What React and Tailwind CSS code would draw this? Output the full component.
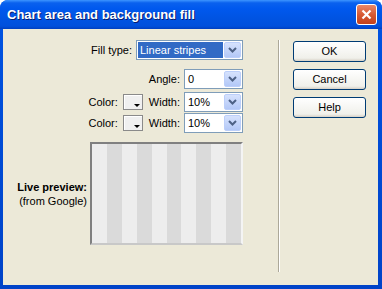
const font = { fontFamily: '"Liberation Sans", Arial, sans-serif' };

const Chevron = () => (
  <svg width="9" height="6" viewBox="0 0 9 6">
    <path d="M1 1 L4.5 4.5 L8 1" fill="none" stroke="#4d6185" strokeWidth="2" />
  </svg>
);

const Select = ({ value, width, selected }) => (
  <div className={`h-[20px] ${width} flex items-center border border-[#7f9db9] bg-white p-[1px]`}>
    <div className="flex-1 h-full flex items-center">
      <span className={`h-full flex items-center pl-[2px] pr-[4px] text-[11px] ${selected ? "bg-[#316ac5] text-white flex-1" : "text-black"}`}>
        {value}
      </span>
    </div>
    <div className="w-[17px] h-full ml-[1px] flex items-center justify-center rounded-[2px] border border-[#bccffa] bg-[linear-gradient(to_bottom,#d6e2fd,#b3c8f7)]">
      <Chevron />
    </div>
  </div>
);

const Swatch = () => (
  <div className="relative w-[20px] h-[16px] border border-[#8a8a8a] bg-[#f0f0f0] shadow-[inset_1px_1px_0_#fff]">
    <div className="absolute right-[2px] bottom-[2px] w-0 h-0 border-l-[3px] border-r-[3px] border-t-[3px] border-l-transparent border-r-transparent border-t-black" />
  </div>
);

const Btn = ({ label }) => (
  <button className="w-[73px] h-[21px] rounded-[3px] border border-[#003c74] bg-[linear-gradient(to_bottom,#ffffff,#f0f0ea_85%,#d6d0c5)] text-[11px] text-black">
    {label}
  </button>
);

export default function App() {
  const stripes = [0, 1, 2, 3, 4, 5, 6, 7, 8, 9];
  return (
    <div style={font} className="w-[382px] h-[289px] flex flex-col rounded-t-[8px] bg-[linear-gradient(to_bottom,#0054e3,#0043c8)] overflow-hidden">
      <div className="h-[29px] flex items-center justify-between pl-[7px] pr-[5px] bg-[linear-gradient(to_bottom,#3d95ff_0%,#0a61ee_10%,#0058ee_30%,#0054e3_60%,#0050dc_90%,#003fc0_100%)]">
        <span className="text-white font-bold text-[13px] [text-shadow:1px_1px_0_#0a1e6e]">
          Chart area and background fill
        </span>
        <div className="w-[21px] h-[21px] flex items-center justify-center rounded-[3px] border border-white bg-[linear-gradient(to_bottom,#e8886a,#d75a34_50%,#c2401b)]">
          <svg width="11" height="11" viewBox="0 0 11 11">
            <path d="M1.5 1.5 L9.5 9.5 M9.5 1.5 L1.5 9.5" stroke="white" strokeWidth="2.2" />
          </svg>
        </div>
      </div>
      <div className="flex-1 ml-[3px] mr-[4px] mb-[4px] bg-[#ece9d8] flex">
        <div className="w-[240px] pt-[11px] flex flex-col">
          <div className="flex items-center justify-end gap-[4px]">
            <span className="text-[11px] text-black">Fill type:</span>
            <Select value="Linear stripes" width="w-[107px]" selected />
          </div>
          <div className="mt-[9px] flex items-center justify-end gap-[4px]">
            <span className="text-[11px] text-black">Angle:</span>
            <Select value="0" width="w-[59px]" />
          </div>
          <div className="mt-[3px] flex items-center justify-end">
            <span className="text-[11px] text-black mr-[5px]">Color:</span>
            <Swatch />
            <span className="text-[11px] text-black ml-[6px] mr-[4px]">Width:</span>
            <Select value="10%" width="w-[59px]" />
          </div>
          <div className="mt-[1px] flex items-center justify-end">
            <span className="text-[11px] text-black mr-[5px]">Color:</span>
            <Swatch />
            <span className="text-[11px] text-black ml-[6px] mr-[4px]">Width:</span>
            <Select value="10%" width="w-[59px]" />
          </div>
          <div className="mt-[9px] flex items-center">
            <div className="w-[84px] text-right text-[11px] text-black leading-[14px]">
              <div className="font-bold">Live preview:</div>
              <div>(from Google)</div>
            </div>
            <div className="ml-[3px] w-[153px] h-[103px] flex border-2 border-t-[#808080] border-l-[#808080] border-b-[#c8c8c8] border-r-[#f4f4f4] bg-white">
              {stripes.map((i) => (
                <div key={i} className={`flex-1 ${i % 2 === 0 ? "bg-[#ededed]" : "bg-[#dadada]"}`} />
              ))}
            </div>
          </div>
        </div>
        <div className="ml-[35px] mt-[11px] mb-[13px] w-[2px] border-l border-l-[#aca899] border-r border-r-white" />
        <div className="ml-[13px] pt-[12px] flex flex-col gap-[7px]">
          <Btn label="OK" />
          <Btn label="Cancel" />
          <Btn label="Help" />
        </div>
      </div>
    </div>
  );
}
